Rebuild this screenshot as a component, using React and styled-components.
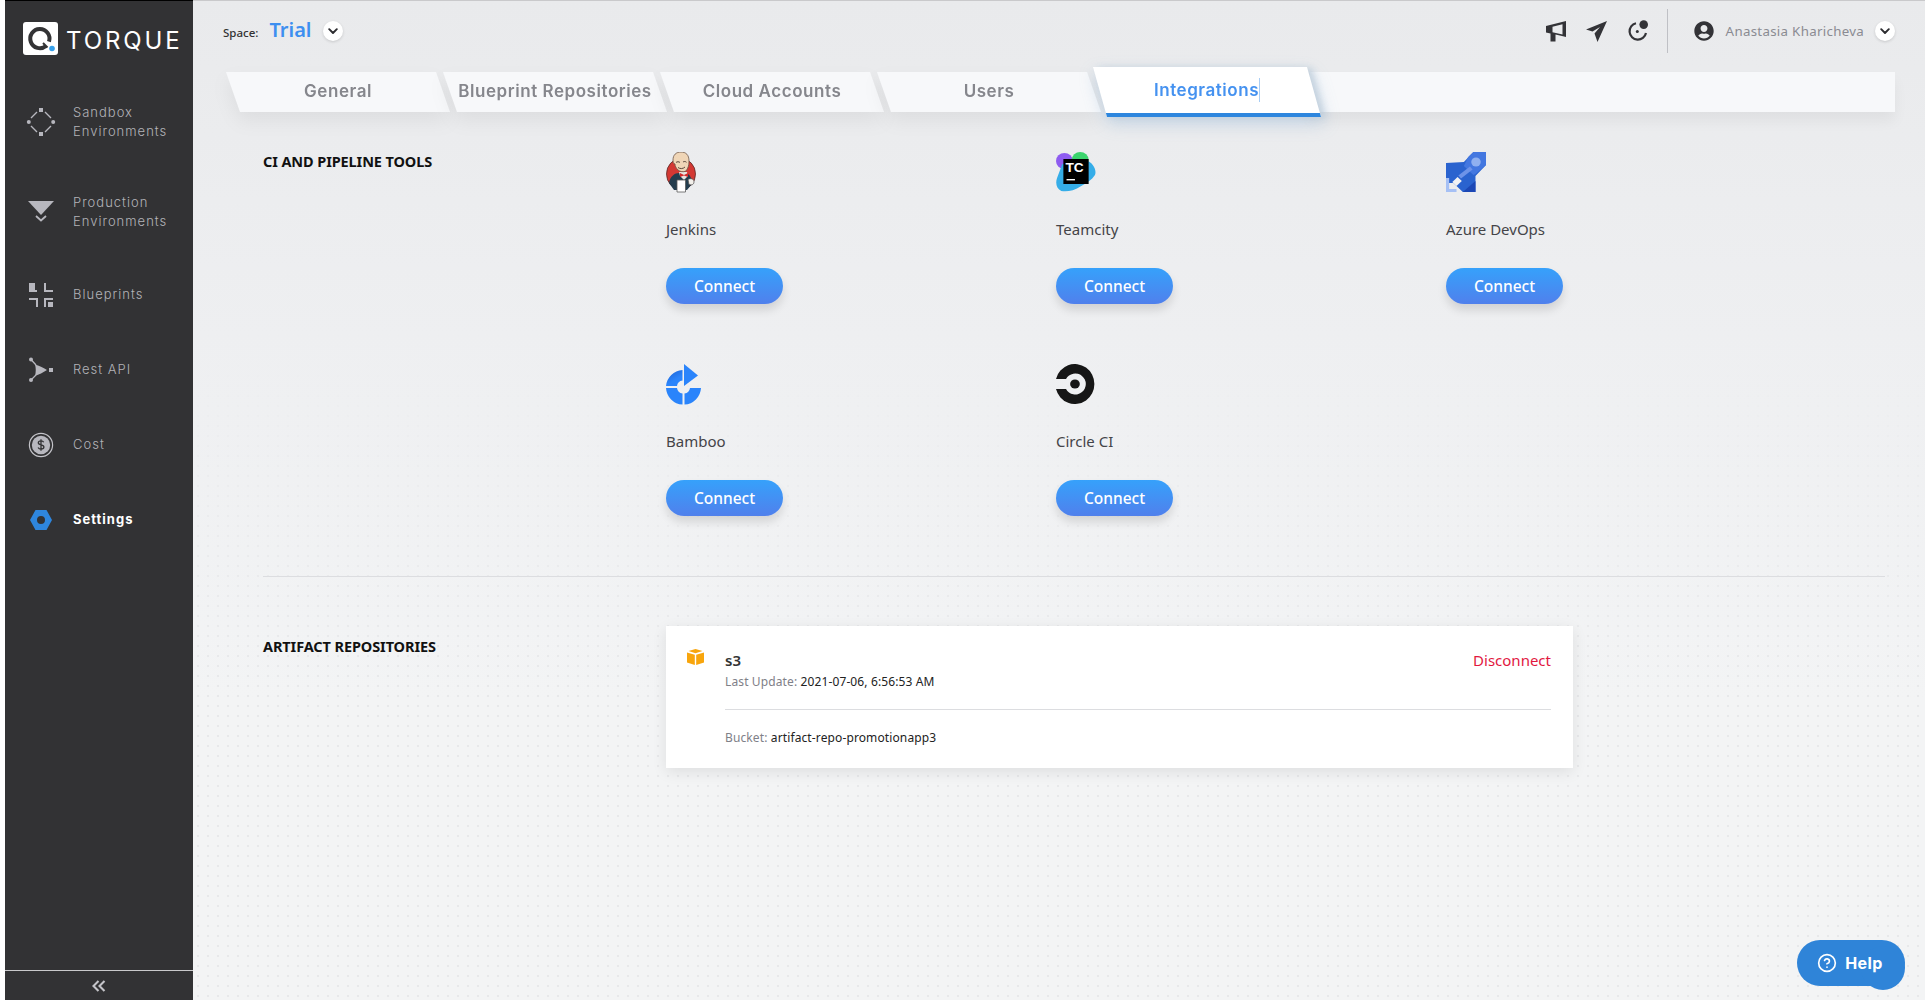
import React from "react";
import styled, { createGlobalStyle } from "styled-components";
import { CircleHelp } from "lucide-react";
import { FaUserCircle } from "react-icons/fa";

const GlobalStyle = createGlobalStyle`
  html, body {
    margin: 0;
    padding: 0;
    background: #fff;
    font-family: "Noto Sans", sans-serif;
  }
  * { box-sizing: border-box; }
`;

const Page = styled.div`
  display: flex;
  height: 1000px;
  padding-left: 5px;
  overflow: hidden;
  position: relative;
`;

const Sidebar = styled.aside`
  width: 188px;
  flex-shrink: 0;
  display: flex;
  flex-direction: column;
  background: #323234;
  border-top: 1px solid #000;
`;

const Logo = styled.div`
  height: 76px;
  padding: 21px 0 0 18px;
  display: flex;
  align-items: flex-start;
  gap: 8px;
`;

const LogoText = styled.span`
  font-family: "Inter", sans-serif;
  font-size: 24px;
  font-weight: 400;
  line-height: 37px;
  letter-spacing: 2.9px;
  color: #fff;
`;

const NavList = styled.nav`
  flex: 1;
  display: flex;
  flex-direction: column;
`;

const NavItem = styled.div`
  height: ${(p) => (p.$tall ? 90 : 75)}px;
  display: flex;
  align-items: center;
  padding-left: 20px;
  gap: 16px;
  font-family: "Inter", sans-serif;
  font-size: 13px;
  line-height: 19px;
  letter-spacing: 1px;
  font-weight: ${(p) => (p.$active ? 700 : 300)};
  color: ${(p) => (p.$active ? "#fff" : "#b3b3b8")};
`;

const NavIcon = styled.span`
  width: 32px;
  height: 32px;
  flex-shrink: 0;
  display: flex;
  align-items: center;
  justify-content: center;
`;

const Collapse = styled.div`
  height: 30px;
  border-top: 1px solid #c9c9cb;
  display: flex;
  align-items: center;
  justify-content: center;
`;

const Main = styled.main`
  flex: 1;
  min-width: 0;
  display: flex;
  flex-direction: column;
  border-top: 1px solid #c9c9cb;
  background-color: #f3f4f5;
  background-image:
    linear-gradient(180deg, #e9eaec 0%, rgba(238, 239, 241, 0.95) 35%, rgba(245, 245, 246, 0) 70%),
    radial-gradient(circle, #e7e8ea 1px, transparent 1.2px);
  background-size: 100% 100%, 10px 10px;
`;

const Header = styled.header`
  height: 71px;
  flex-shrink: 0;
  display: flex;
  align-items: center;
  padding: 0 30px;
  padding-bottom: 11px;
`;

const SpaceLabel = styled.span`
  font-size: 11.5px;
  font-weight: 500;
  color: #333;
  margin-right: 11px;
  margin-top: 3px;
`;

const SpaceName = styled.span`
  font-size: 20px;
  font-weight: 600;
  color: #3d8ff0;
  margin-right: 11px;
  margin-top: -3px;
`;

const ChevronButton = styled.span`
  width: 20px;
  height: 20px;
  border-radius: 50%;
  background: #fff;
  box-shadow: 0 1px 3px rgba(0, 0, 0, 0.15);
  display: flex;
  align-items: center;
  justify-content: center;
`;

const HeaderRight = styled.div`
  margin-left: auto;
  display: flex;
  align-items: center;
`;

const HeaderIcons = styled.div`
  display: flex;
  align-items: center;
  gap: 20px;
  padding-right: 18px;
  height: 44px;
  border-right: 1px solid #bfc0c5;
  margin-right: 26px;
`;

const UserName = styled.span`
  margin: 0 11px 0 12px;
  font-size: 13.3px;
  letter-spacing: 0.3px;
  color: #8a8b92;
`;

const TabBar = styled.div`
  height: 40px;
  margin: 0 30px 0 33px;
  display: flex;
  align-items: flex-start;
  flex-shrink: 0;
`;

const TabSlot = styled.div`
  width: ${(p) => (p.$active ? 228 : 224)}px;
  margin-left: ${(p) => (p.$first ? 0 : p.$active ? -8 : -7)}px;
  margin-right: ${(p) => (p.$active ? -4 : 0)}px;
  margin-top: ${(p) => (p.$active ? -5 : 0)}px;
  position: relative;
  z-index: ${(p) => (p.$active ? 2 : 1)};
  filter: ${(p) =>
    p.$active
      ? "drop-shadow(5px 1px 3px rgba(190, 204, 218, 0.75)) drop-shadow(0 6px 8px rgba(70, 130, 190, 0.22))"
      : "drop-shadow(0 9px 9px rgba(0, 0, 0, 0.055))"};
`;

const TabFace = styled.div`
  height: ${(p) => (p.$active ? 50 : 40)}px;
  padding-bottom: ${(p) => (p.$active ? 0 : 2)}px;
  display: flex;
  align-items: center;
  justify-content: center;
  background: ${(p) => (p.$active ? "#fff" : "#f7f8fa")};
  border-bottom: ${(p) => (p.$active ? "4px solid #2d86de" : "none")};
  clip-path: polygon(0 0, calc(100% - 14px) 0, 100% 100%, 14px 100%);
  font-family: "Inter", sans-serif;
  font-size: 17px;
  font-weight: 600;
  letter-spacing: 0.55px;
  white-space: nowrap;
  color: ${(p) => (p.$active ? "#4592f0" : "#85868c")};
`;

const Caret = styled.span`
  border-right: 1px solid #a8cdf5;
  height: 24px;
  line-height: 24px;
`;

const TabFill = styled.div`
  flex: 1;
  height: 40px;
  margin-left: -7px;
  background: #f7f8fa;
  box-shadow: 0 9px 14px rgba(0, 0, 0, 0.05);
`;

const Content = styled.div`
  padding: 0 40px 0 70px;
`;

const Section = styled.section`
  display: grid;
  grid-template-columns: 403px 1fr;
  padding: ${(p) => p.$top}px 0 ${(p) => p.$bottom}px;
  border-bottom: ${(p) => (p.$divider ? "1px solid #dcdde0" : "none")};
`;

const SectionTitle = styled.h2`
  margin: ${(p) => p.$top || 0}px 0 0;
  font-size: 14.5px;
  line-height: 18px;
  font-weight: 700;
  letter-spacing: -0.1px;
  color: #111;
`;

const ToolGrid = styled.div`
  display: grid;
  grid-template-columns: repeat(3, 390px);
  row-gap: 60px;
`;

const Tool = styled.div`
  display: flex;
  flex-direction: column;
  align-items: flex-start;
`;

const ToolLogo = styled.div`
  height: 40px;
  display: flex;
  align-items: center;
`;

const ToolName = styled.div`
  margin-top: 27px;
  font-size: 15px;
  line-height: 20px;
  color: #444448;
`;

const ConnectButton = styled.button`
  margin-top: 29px;
  width: 117px;
  height: 36px;
  border: none;
  border-radius: 18px;
  background: linear-gradient(180deg, #36a1fb 0%, #5080ec 100%);
  box-shadow: 0 6px 10px rgba(0, 0, 0, 0.12);
  color: #fff;
  font-family: "Noto Sans", sans-serif;
  font-size: 15.5px;
  font-weight: 500;
`;

const Card = styled.div`
  width: 907px;
  display: flex;
  background: #fff;
  padding: 24px 22px 22px 21px;
  box-shadow: 0 4px 14px rgba(0, 0, 0, 0.09);
`;

const CardIcon = styled.div`
  width: 38px;
  flex-shrink: 0;
  margin-top: -2px;
`;

const CardBody = styled.div`
  flex: 1;
`;

const CardTop = styled.div`
  display: flex;
  justify-content: space-between;
  align-items: center;
  font-size: 15px;
  line-height: 20px;
`;

const RepoName = styled.span`
  font-weight: 600;
  color: #333;
`;

const Disconnect = styled.span`
  color: #e2173f;
  font-size: 15px;
`;

const Meta = styled.div`
  margin-top: ${(p) => p.$top}px;
  font-size: 12px;
  line-height: 16px;
  letter-spacing: 0.12px;
  color: #222;
`;

const MetaLabel = styled.span`
  color: #808088;
`;

const CardRule = styled.div`
  margin-top: 19px;
  height: 1px;
  background: #dcdde0;
`;

const HelpButton = styled.div`
  position: absolute;
  left: 1797px;
  top: 940px;
  width: 108px;
  height: 46px;
  border-radius: 23px;
  background: #2f84d8;
  color: #fff;
  display: flex;
  align-items: center;
  justify-content: center;
  gap: 8px;
  padding-right: 2px;
  font-family: "Inter", sans-serif;
  font-size: 16px;
  font-weight: 700;
  letter-spacing: 0.4px;

  &::after {
    content: "";
    position: absolute;
    right: 0;
    bottom: -4px;
    width: 44px;
    height: 44px;
    border-radius: 50%;
    background: #2f84d8;
    z-index: 0;
  }

  & > * {
    position: relative;
    z-index: 1;
  }
`;

const Chevron = ({ size = 10, color = "#2c2c30" }) => (
  <svg width={size} height={size} viewBox="0 0 10 10" fill="none">
    <path d="M1.2 3.2 5 7l3.8-3.8" stroke={color} strokeWidth="1.9" strokeLinecap="round" strokeLinejoin="round" />
  </svg>
);

const LogoMark = () => (
  <svg width="35" height="33" viewBox="0 0 35 33">
    <rect width="35" height="33" rx="3" fill="#fff" />
    <path d="M23 24a9.6 9.6 0 1 1 3-4.4" fill="none" stroke="#333335" strokeWidth="4" />
    <path d="M20 21l4.5 4.5" stroke="#333335" strokeWidth="2" />
    <circle cx="29" cy="26.5" r="2.8" fill="#36a0ea" />
  </svg>
);

const SandboxIcon = () => (
  <svg width="30" height="30" viewBox="0 0 30 30" fill="#b7b7be">
    <rect x="13" y="1" width="4" height="4" />
    <rect x="13" y="25" width="4" height="4" />
    <circle cx="2.8" cy="15" r="2" />
    <circle cx="27.2" cy="15" r="2" />
    <path d="M5 11 11 5M19 5l6 6M5 19l6 6M19 25l6-6" stroke="#b7b7be" strokeWidth="1.4" fill="none" />
  </svg>
);

const ProductionIcon = () => (
  <svg width="28" height="24" viewBox="0 0 28 24">
    <path d="M1 1h26L14 15z" fill="#b7b7be" />
    <path d="M9 16l5 4.5L19 16" stroke="#b7b7be" strokeWidth="1.8" fill="none" />
  </svg>
);

const BlueprintIcon = () => (
  <svg width="24" height="24" viewBox="0 0 24 24" fill="#b7b7be">
    <path d="M0 0h6v7h2V0h0v9H0z" />
    <path d="M15 0h2v7h7v2h-9z" />
    <path d="M0 15h9v9H7v-7H0z" />
    <path d="M15 15h9v2h-7v7h-2zM19 19h5v5h-5z" />
  </svg>
);

const RestIcon = () => (
  <svg width="26" height="26" viewBox="0 0 26 26" fill="#b7b7be">
    <circle cx="3" cy="2.500" r="2" />
    <circle cx="3" cy="23" r="2" />
    <path d="M3 2.500 8 8M3 23l5-5" stroke="#b7b7be" strokeWidth="1.3" />
    <path d="M7 7.500c4 1 8 3 12 5.500-4 2.500-8 4.500-12 6 1-4 1-8 0-11.500z" />
    <rect x="21" y="11" width="4" height="4" />
  </svg>
);

const CostIcon = () => (
  <svg width="26" height="26" viewBox="0 0 26 26">
    <circle cx="13" cy="13" r="11.6" fill="none" stroke="#c4c4c9" strokeWidth="1.2" />
    <circle cx="13" cy="13" r="9.2" fill="#b7b7be" />
    <path
      d="M15.7 10.2c-.5-1-1.5-1.4-2.7-1.4-1.5 0-2.7.7-2.7 2 0 2.9 5.6 1.4 5.6 4.3 0 1.3-1.2 2-2.9 2-1.3 0-2.4-.6-2.9-1.6M13 7.2v11.6"
      fill="none"
      stroke="#323234"
      strokeWidth="1.3"
    />
  </svg>
);

const SettingsIcon = () => (
  <svg width="24" height="22" viewBox="0 0 24 22">
    <path fillRule="evenodd" d="M6.5 1h11L23 11l-5.5 10h-11L1 11zM12 7a4 4 0 1 0 0 8 4 4 0 0 0 0-8z" fill="#2e86de" />
  </svg>
);

const DoubleChevron = () => (
  <svg width="14" height="12" viewBox="0 0 14 12" fill="none" stroke="#c4c4c9" strokeWidth="2.1">
    <path d="M6.5 1 1.5 6l5 5M12.5 1l-5 5 5 5" />
  </svg>
);

const MegaphoneIcon = () => (
  <svg width="20" height="21" viewBox="0 0 20 21" fill="#333337">
    <path
      fillRule="evenodd"
      d="M20 0v16L16 15 9.500 13.500V20.500H4.500V12.500L0 11.500V5l4-1zM6.500 5.800v5.400l10 2.200V3.300z"
    />
  </svg>
);

const PlaneIcon = () => (
  <svg width="21" height="21" viewBox="0 0 21 21">
    <path d="M21 0 11.500 21 8.500 12.500 14 6 6.500 10.500 0 8.500z" fill="#333337" />
  </svg>
);

const OrbitIcon = () => (
  <svg width="22" height="22" viewBox="0 0 22 22">
    <path d="M9 3.2a8.3 8.3 0 1 0 10 9.8" fill="none" stroke="#333337" strokeWidth="2.2" />
    <circle cx="16.7" cy="4.6" r="4.3" fill="#333337" />
    <circle cx="10.3" cy="11.5" r="1.5" fill="#333337" />
  </svg>
);

const JenkinsLogo = () => (
  <svg width="31" height="41" viewBox="0 0 31 41">
    <ellipse cx="15" cy="22" rx="14.500" ry="15.500" fill="#d33833" stroke="#5c2b28" strokeWidth="0.8" />
    <path d="M3 31c1-7 6-10 10-10l9 1c3 2 4 6 4 10l-5 6H8z" fill="#233d4e" />
    <path d="M13 20h8l1 4-4 4-4-4z" fill="#e8e4df" />
    <path d="M14 21l4 2 4-2v4l-4-1.500-4 1.500z" fill="#d32a2a" />
    <path
      d="M7 8c0-5 3-8 8-8s8 3 8 9c0 5-1 7-3 10-3 1.500-6 .5-8-1-2-2-3-4-3-6-2 0-2-3-2-4z"
      fill="#f0d6b7"
      stroke="#6d5546"
      strokeWidth="0.8"
    />
    <path d="M10 10.500c1-1 3-1 4 0M17 10c1-.7 2.500-.7 3.500.3M12 15.500c2 1.500 5 1.500 7-.5" stroke="#4a3a30" strokeWidth="0.9" fill="none" />
    <path d="M11 28h8.500v12H11z" fill="#fff" stroke="#5b5b5b" strokeWidth="0.8" />
    <path d="M22 27.500c2-1.500 6-1 6 2s-2 4-5 3z" fill="#f2efea" stroke="#555" strokeWidth="0.8" />
  </svg>
);

const TeamcityLogo = () => (
  <svg width="40" height="40" viewBox="0 0 38 40" preserveAspectRatio="none">
    <circle cx="8" cy="9" r="8" fill="#8e5cf0" />
    <circle cx="23" cy="8" r="8" fill="#3bd46d" />
    <path d="M6 12 28 8c7 2 11 10 9 15-3 5-8 8-13 11-7 5-14 6-19 5-4-2-6-7-4-13z" fill="#35ade8" />
    <rect x="7" y="7" width="24" height="25" fill="#000" />
    <text x="9" y="20.500" fontFamily="Liberation Sans, sans-serif" fontSize="13" fontWeight="700" fill="#fff">
      TC
    </text>
    <rect x="10" y="27" width="8" height="1.400" fill="#fff" />
  </svg>
);

const AzureLogo = () => (
  <svg width="40" height="40" viewBox="0 0 38 40" preserveAspectRatio="none">
    <path d="M0 11 17 10 26 0h12v13l-10 11v16H16L7 31H0z" fill="#2a63cf" />
    <path d="M21 5 26 0h12v13l-10 9-2 1-9-9z" fill="#4377e0" />
    <circle cx="28.500" cy="10" r="4.500" fill="#8fb0f0" />
    <path d="M13 25 24 16" stroke="#6d93e8" strokeWidth="4" />
    <path d="M0 26h3v11h7v3H0z" fill="#a6c0f5" />
    <path d="M6 30l5-5 4 4-5 5z" fill="#f1f2f4" />
    <path d="M16 40 28 29v11z" fill="#1c47b5" />
  </svg>
);

const BambooLogo = () => (
  <svg width="36" height="41" viewBox="0 0 36 41">
    <defs>
      <linearGradient id="bambooBlue" x1="0" y1="0" x2="0.6" y2="1">
        <stop offset="0" stopColor="#1c5fd0" />
        <stop offset="0.7" stopColor="#2a84fb" />
      </linearGradient>
    </defs>
    <path d="M16.500 6A17.500 17.500 0 0 0 0 22h11a6.500 6.500 0 0 1 5.500-5.500z" fill="url(#bambooBlue)" />
    <path d="M0 24a17.500 17.500 0 0 0 16.500 16.500v-11A6.500 6.500 0 0 1 11 24z" fill="#2a84fb" />
    <path d="M18.500 40.500A17.500 17.500 0 0 0 35 24H24a6.500 6.500 0 0 1-5.500 5.500z" fill="#2a84fb" />
    <path d="M18 0 32 11.500 18 22z" fill="#2a84fb" />
  </svg>
);

const CircleLogo = () => (
  <svg width="39" height="40" viewBox="0 0 37 40" preserveAspectRatio="none">
    <path d="M0 15A18.500 20 0 1 1 0 25h9.500a10 10.500 0 1 0 0-10z" fill="#161616" />
    <circle cx="18" cy="20" r="4.600" fill="#161616" />
  </svg>
);

const BoxIcon = () => (
  <svg width="17" height="16" viewBox="0 0 17 16" fill="#f8a50c">
    <path d="M8.500 0 15.500 2 8.500 4.200 1.500 2z" />
    <path d="M0 3.400 7.800 5.700V16L0 13.500z" />
    <path d="M17 3.400 9.200 5.700V16L17 13.500z" />
  </svg>
);

const navItems = [
  { label: ["Sandbox", "Environments"], icon: <SandboxIcon /> },
  { label: ["Production", "Environments"], icon: <ProductionIcon /> },
  { label: ["Blueprints"], icon: <BlueprintIcon /> },
  { label: ["Rest API"], icon: <RestIcon /> },
  { label: ["Cost"], icon: <CostIcon /> },
  { label: ["Settings"], icon: <SettingsIcon />, active: true },
];

const tabs = ["General", "Blueprint Repositories", "Cloud Accounts", "Users"];

const tools = [
  { name: "Jenkins", logo: <JenkinsLogo /> },
  { name: "Teamcity", logo: <TeamcityLogo /> },
  { name: "Azure DevOps", logo: <AzureLogo /> },
  { name: "Bamboo", logo: <BambooLogo /> },
  { name: "Circle CI", logo: <CircleLogo /> },
];

const App = () => {
  return (
    <Page>
      <GlobalStyle />
      <Sidebar>
        <Logo>
          <LogoMark />
          <LogoText>TORQUE</LogoText>
        </Logo>
        <NavList>
          {navItems.map((item) => (
            <NavItem key={item.label[0]} $tall={item.label.length > 1} $active={item.active}>
              <NavIcon>{item.icon}</NavIcon>
              <div>
                {item.label.map((line) => (
                  <div key={line}>{line}</div>
                ))}
              </div>
            </NavItem>
          ))}
        </NavList>
        <Collapse>
          <DoubleChevron />
        </Collapse>
      </Sidebar>
      <Main>
        <Header>
          <SpaceLabel>Space:</SpaceLabel>
          <SpaceName>Trial</SpaceName>
          <ChevronButton>
            <Chevron />
          </ChevronButton>
          <HeaderRight>
            <HeaderIcons>
              <MegaphoneIcon />
              <PlaneIcon />
              <OrbitIcon />
            </HeaderIcons>
            <FaUserCircle size={20} color="#333337" />
            <UserName>Anastasia Kharicheva</UserName>
            <ChevronButton>
              <Chevron />
            </ChevronButton>
          </HeaderRight>
        </Header>
        <TabBar>
          {tabs.map((tab, i) => (
            <TabSlot key={tab} $first={i === 0}>
              <TabFace>{tab}</TabFace>
            </TabSlot>
          ))}
          <TabSlot $active>
            <TabFace $active>
              <Caret>Integrations</Caret>
            </TabFace>
          </TabSlot>
          <TabFill />
        </TabBar>
        <Content>
          <Section $top={40} $bottom={60} $divider>
            <SectionTitle>CI AND PIPELINE TOOLS</SectionTitle>
            <ToolGrid>
              {tools.map((tool) => (
                <Tool key={tool.name}>
                  <ToolLogo>{tool.logo}</ToolLogo>
                  <ToolName>{tool.name}</ToolName>
                  <ConnectButton>Connect</ConnectButton>
                </Tool>
              ))}
            </ToolGrid>
          </Section>
          <Section $top={49} $bottom={0}>
            <SectionTitle $top={11}>ARTIFACT REPOSITORIES</SectionTitle>
            <Card>
              <CardIcon>
                <BoxIcon />
              </CardIcon>
              <CardBody>
                <CardTop>
                  <RepoName>s3</RepoName>
                  <Disconnect>Disconnect</Disconnect>
                </CardTop>
                <Meta $top={4}>
                  <MetaLabel>Last Update:</MetaLabel> 2021-07-06, 6:56:53 AM
                </Meta>
                <CardRule />
                <Meta $top={20}>
                  <MetaLabel>Bucket:</MetaLabel> artifact-repo-promotionapp3
                </Meta>
              </CardBody>
            </Card>
          </Section>
        </Content>
      </Main>
      <HelpButton>
        <CircleHelp size={20} strokeWidth={2} />
        <span>Help</span>
      </HelpButton>
    </Page>
  );
};

export default App;
